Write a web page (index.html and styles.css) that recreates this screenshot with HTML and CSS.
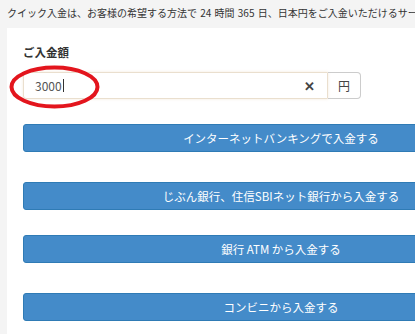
FILE: index.html
```html
<!DOCTYPE html>
<html lang="ja">
<head>
    <meta charset="UTF-8">
    <title>クイック入金</title>
    <link rel="stylesheet" href="styles.css">
</head>
<body>
    <p class="lead">クイック入金は、お客様の希望する方法で 24 時間 365 日、日本円をご入金いただけるサービスです。</p>
    <div class="panel">
        <div class="label">ご入金額</div>
        <div class="amount">
            <div class="field">
                <span class="value">3000</span><span class="caret"></span>
                <span class="clear">&#x2715;</span>
            </div>
            <div class="unit">円</div>
            <!-- 注釈の赤丸 -->
            <svg class="mark" width="91" height="44" viewBox="0 0 91 44">
                <ellipse cx="45.5" cy="22" rx="43" ry="19.5" fill="none" stroke="#e3151d" stroke-width="4"/>
            </svg>
        </div>
        <button class="btn first">インターネットバンキングで入金する</button>
        <button class="btn wide">じぶん銀行、住信SBIネット銀行から入金する</button>
        <button class="btn">銀行 ATM から入金する</button>
        <button class="btn wide">コンビニから入金する</button>
    </div>
</body>
</html>
```

FILE: styles.css
```css
html, body {
    margin: 0;
    padding: 0;
    overflow: hidden;
}

body {
    background: #f4f4f4;
    font-family: "Noto Sans CJK JP", "Noto Sans", sans-serif;
    color: #333;
    width: 415px;
    height: 334px;
}

.lead {
    margin: 0;
    padding: 5px 0 0 7px;
    font-size: 10px;
    line-height: 16px;
    white-space: nowrap;
    word-spacing: 1px;
    color: #333;
}

.panel {
    margin: 7px 0 0 7px;
    width: 560px;
    height: 320px;
    background: #fff;
    padding: 16px 0 0 16px;
    box-sizing: border-box;
    display: flex;
    flex-direction: column;
    align-items: flex-start;
}

.label {
    font-size: 11.5px;
    font-weight: bold;
    line-height: 16px;
    color: #333;
}

.amount {
    position: relative;
    display: flex;
    margin-top: 12px;
    height: 27px;
}

.field {
    width: 305px;
    box-sizing: border-box;
    border: 1px solid #eadfce;
    border-radius: 3px 0 0 3px;
    box-shadow: 0 0 3px rgba(220, 190, 150, .35);
    display: flex;
    align-items: center;
    padding-left: 11px;
    font-size: 12px;
    color: #555;
}

.caret {
    width: 1px;
    height: 13px;
    background: #333;
    margin-left: 1px;
}

.clear {
    margin-left: auto;
    margin-right: 12px;
    font-size: 13px;
    font-weight: bold;
    color: #444;
}

.unit {
    width: 33px;
    box-sizing: border-box;
    border: 1px solid #ccc;
    border-left: none;
    border-radius: 0 4px 4px 0;
    display: flex;
    align-items: center;
    justify-content: center;
    font-size: 12px;
    color: #444;
}

.mark {
    position: absolute;
    left: -14px;
    top: -7px;
}

.btn {
    width: 516px;
    height: 28px;
    margin-top: 30px;
    padding: 0;
    background: #448bc9;
    border: 1px solid #2f7bb5;
    border-radius: 3px;
    color: #fff;
    font-family: inherit;
    font-size: 11.5px;
    line-height: 26px;
    text-align: center;
}

.btn.first {
    margin-top: 25px;
}

.btn.wide {
    margin-top: 30px;
}

.btn:not(.wide):not(.first) {
    margin-top: 25px;
}
```
